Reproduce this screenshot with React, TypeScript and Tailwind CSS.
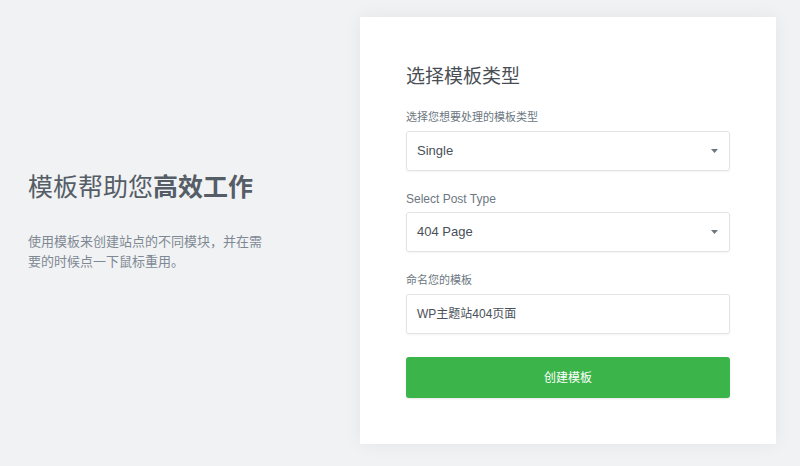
const FONT = "font-['Liberation_Sans','Noto_Sans_CJK_SC',sans-serif]";

function Caret() {
  return (
    <svg width="7" height="4" viewBox="0 0 7 4" className="shrink-0">
      <path d="M0 0h7L3.5 4z" fill="#6c7781" />
    </svg>
  );
}

function SelectBox({ value }: { value: string }) {
  return (
    <div className="flex h-[40px] items-center justify-between rounded-[3px] border border-[#e2e4e7] bg-white pl-[10px] pr-[11px] text-[13px] text-[#4a5058] shadow-[0_1px_2px_rgba(0,0,0,0.05)]">
      <span>{value}</span>
      <Caret />
    </div>
  );
}

export default function App() {
  return (
    <div className={`${FONT} flex h-[466px] w-[800px] bg-[#f1f2f4] pt-[17px]`}>
      <div className="flex w-[360px] flex-col justify-center pb-[40px] pl-[28px] pr-[28px]">
        <h1 className="text-[25px] leading-[32px] text-[#555d66]">
          模板帮助您<strong className="font-bold">高效工作</strong>
        </h1>
        <p className="mt-[29px] w-[240px] text-[13px] leading-[20px] text-[#7e8993]">
          使用模板来创建站点的不同模块，并在需要的时候点一下鼠标重用。
        </p>
      </div>

      <div className="h-[427px] w-[416px] bg-white px-[46px] pt-[46px] shadow-[0_0_18px_rgba(0,0,0,0.06)]">
        <h2 className="text-[19px] leading-[28px] text-[#4a4f55]">选择模板类型</h2>

        <label className="mt-[19px] block text-[11px] leading-[14px] text-[#6c7781]">
          选择您想要处理的模板类型
        </label>
        <div className="mt-[7px]">
          <SelectBox value="Single" />
        </div>

        <label className="mt-[21px] block text-[12px] leading-[14px] text-[#6c7781]">
          Select Post Type
        </label>
        <div className="mt-[6px]">
          <SelectBox value="404 Page" />
        </div>

        <label className="mt-[21px] block text-[11px] leading-[14px] text-[#6c7781]">
          命名您的模板
        </label>
        <div className="mt-[7px] flex h-[40px] items-center rounded-[3px] border border-[#e2e4e7] bg-white pl-[10px] text-[12px] text-[#4a5058] shadow-[0_1px_2px_rgba(0,0,0,0.05)]">
          WP主题站404页面
        </div>

        <button className="mt-[23px] flex h-[41px] w-full items-center justify-center rounded-[3px] bg-[#3bb54a] text-[12px] text-white shadow-[0_1px_2px_rgba(0,0,0,0.1)]">
          创建模板
        </button>
      </div>
    </div>
  );
}
